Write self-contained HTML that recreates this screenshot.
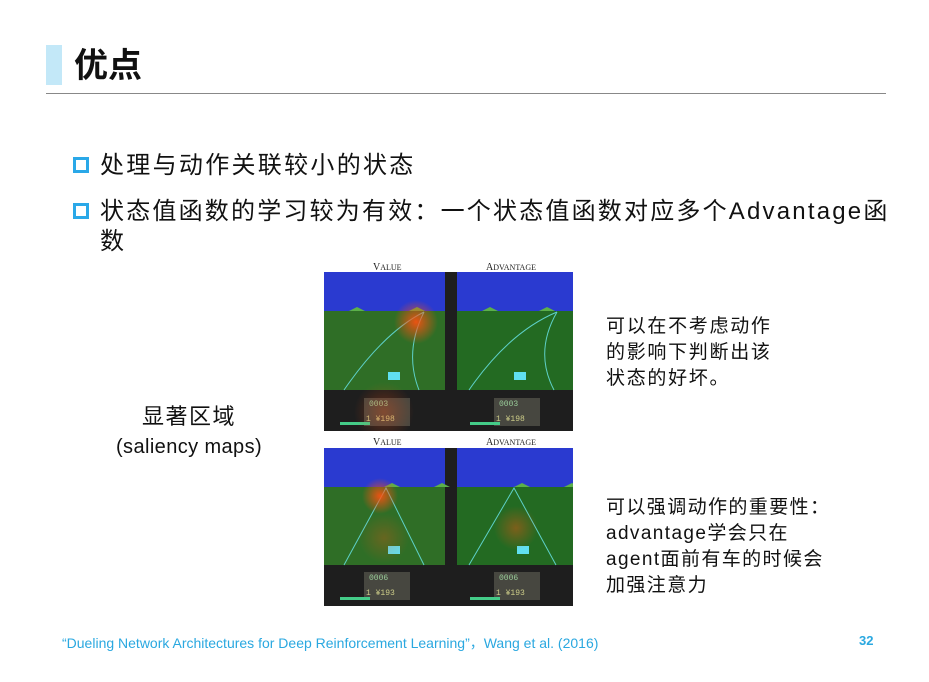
<!DOCTYPE html>
<html><head><meta charset="utf-8"><style>
body{margin:0;width:929px;height:682px;background:#fff;position:relative;overflow:hidden;font-family:"Liberation Sans","Noto Sans CJK SC",sans-serif;color:#111}
.a{position:absolute;white-space:nowrap}
.bul{position:absolute;width:10px;height:10px;border:3px solid #2aa8e8;background:#fff}
.lbl{font-family:"Liberation Serif",serif;font-size:10px;color:#222;position:absolute}
</style></head><body>
<div class="a" style="left:46px;top:45px;width:16px;height:40px;background:#c3e8f8"></div>
<div class="a" style="left:74px;top:42px;font-size:34px;font-weight:bold;line-height:48px">优点</div>
<div class="a" style="left:46px;top:93px;width:840px;height:1px;background:#888"></div>

<div class="bul" style="left:73px;top:157px"></div>
<div class="a" style="left:100px;top:150px;font-size:24px;line-height:32px;letter-spacing:2.3px">处理与动作关联较小的状态</div>
<div class="bul" style="left:73px;top:203px"></div>
<div class="a" style="left:100px;top:196px;font-size:24px;line-height:32px;letter-spacing:2.2px">状态值函数的学习较为有效：一个状态值函数对应多个Advantage函</div>
<div class="a" style="left:100px;top:226px;font-size:24px;line-height:32px">数</div>

<div class="a" style="left:142px;top:402px;font-size:22px;line-height:30px;letter-spacing:1.5px">显著区域</div>
<div class="a" style="left:116px;top:434px;font-size:20px;line-height:26px;letter-spacing:0.4px">(saliency maps)</div>

<div class="lbl" style="left:373px;top:262px">V<span style="font-size:8px">ALUE</span></div>
<div class="lbl" style="left:486px;top:262px">A<span style="font-size:8px">DVANTAGE</span></div>
<div class="lbl" style="left:373px;top:437px">V<span style="font-size:8px">ALUE</span></div>
<div class="lbl" style="left:486px;top:437px">A<span style="font-size:8px">DVANTAGE</span></div>

<svg class="a" style="left:324px;top:272px" width="249" height="159">
<defs><radialGradient id="r"><stop offset="0" stop-color="#ff5010" stop-opacity=".9"/><stop offset="1" stop-color="#ff5010" stop-opacity="0"/></radialGradient></defs>
<rect width="249" height="159" fill="#1e1e1e"/>
<rect x="0" width="121" height="39" fill="#2a3ad0"/><rect x="0" y="39" width="121" height="79" fill="#2f6e26"/>
<rect x="133" width="116" height="39" fill="#2a3ad0"/><rect x="133" y="39" width="116" height="79" fill="#236a22"/>
<path d="M25 39l8-4 8 4M85 39l8-4 8 4M158 39l8-4 8 4M215 39l8-4 8 4" fill="#5cb04a"/>
<path d="M20 118Q60 60 100 40M100 40Q80 80 95 118M145 118Q185 60 233 40M233 40Q210 80 230 118" stroke="#5ed0c8" fill="none"/>
<rect x="64" y="100" width="12" height="8" fill="#60e0f0"/><rect x="190" y="100" width="12" height="8" fill="#60e0f0"/>
<rect x="40" y="126" width="46" height="28" fill="#474740"/><rect x="170" y="126" width="46" height="28" fill="#474740"/>
<text x="45" y="134" font-size="8" fill="#9c9" font-family="Liberation Mono">0003</text><text x="175" y="134" font-size="8" fill="#9c9" font-family="Liberation Mono">0003</text>
<text x="42" y="149" font-size="8" fill="#cc8" font-family="Liberation Mono">1 ¥198</text><text x="172" y="149" font-size="8" fill="#cc8" font-family="Liberation Mono">1 ¥198</text>
<rect x="16" y="150" width="30" height="3" fill="#4c8"/><rect x="146" y="150" width="30" height="3" fill="#4c8"/>
<circle cx="92" cy="50" r="22" fill="url(#r)"/><circle cx="60" cy="140" r="30" fill="url(#r)" opacity=".35"/>
</svg>

<svg class="a" style="left:324px;top:448px" width="249" height="158">
<rect width="249" height="158" fill="#1e1e1e"/>
<rect x="0" width="121" height="39" fill="#2a3ad0"/><rect x="0" y="39" width="121" height="78" fill="#2f6e26"/>
<rect x="133" width="116" height="39" fill="#2a3ad0"/><rect x="133" y="39" width="116" height="78" fill="#236a22"/>
<path d="M60 39l8-4 8 4M110 39l8-4 8 4M190 39l8-4 8 4M240 39l8-4 8 4" fill="#5cb04a"/>
<path d="M20 117L62 40L100 117M145 117L190 40L232 117" stroke="#5ed0c8" fill="none"/>
<rect x="64" y="98" width="12" height="8" fill="#60e0f0"/><rect x="193" y="98" width="12" height="8" fill="#60e0f0"/>
<rect x="40" y="124" width="46" height="28" fill="#474740"/><rect x="170" y="124" width="46" height="28" fill="#474740"/>
<text x="45" y="132" font-size="8" fill="#9c9" font-family="Liberation Mono">0006</text><text x="175" y="132" font-size="8" fill="#9c9" font-family="Liberation Mono">0006</text>
<text x="42" y="147" font-size="8" fill="#cc8" font-family="Liberation Mono">1 ¥193</text><text x="172" y="147" font-size="8" fill="#cc8" font-family="Liberation Mono">1 ¥193</text>
<rect x="16" y="149" width="30" height="3" fill="#4c8"/><rect x="146" y="149" width="30" height="3" fill="#4c8"/>
<circle cx="56" cy="48" r="18" fill="url(#r)"/><circle cx="60" cy="90" r="25" fill="url(#r)" opacity=".3"/><circle cx="192" cy="80" r="22" fill="url(#r)" opacity=".45"/>
</svg>

<div class="a" style="left:606px;top:314px;font-size:19px;line-height:26px;letter-spacing:1.7px">可以在不考虑动作<br>的影响下判断出该<br>状态的好坏。</div>
<div class="a" style="left:606px;top:495px;font-size:19px;line-height:26px;letter-spacing:1.4px">可以强调动作的重要性：<br>advantage学会只在<br>agent面前有车的时候会<br>加强注意力</div>

<div class="a" style="left:62px;top:633px;font-size:14px;color:#2aa8e0">“Dueling Network Architectures for Deep Reinforcement Learning”，Wang et al. (2016)</div>
<div class="a" style="left:859px;top:633px;font-size:13px;font-weight:bold;color:#2aa8e0">32</div>
</body></html>
